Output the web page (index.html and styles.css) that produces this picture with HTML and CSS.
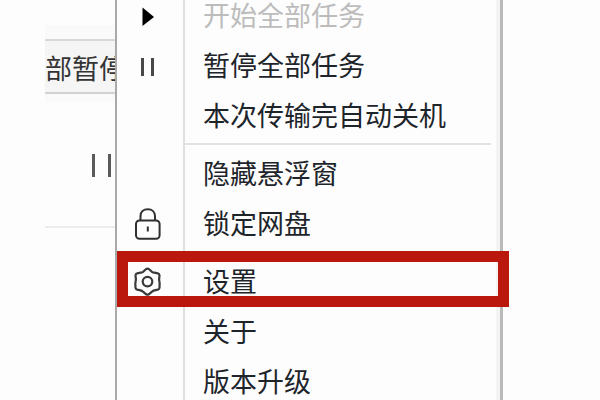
FILE: index.html
```html
<!DOCTYPE html>
<html lang="zh-CN">
<head>
    <meta charset="UTF-8">
    <title>传输列表</title>
    <link rel="stylesheet" href="styles.css">
</head>
<body>
    <div class="panel">
        <div class="toolbar">
            <div class="toolbar-button">部暂停</div>
        </div>
        <div class="task">
            <span class="task-pause"></span>
        </div>
    </div>

    <div class="menu">
        <div class="item disabled">
            <span class="icon">
                <svg width="12" height="20" viewBox="0 0 12 20"><path d="M0.5 1.5L12 11L0.5 20Z" fill="#000"/></svg>
            </span>
            <span class="label">开始全部任务</span>
        </div>
        <div class="item">
            <span class="icon"><span class="pause"></span></span>
            <span class="label">暂停全部任务</span>
        </div>
        <div class="item">
            <span class="icon"></span>
            <span class="label">本次传输完自动关机</span>
        </div>
        <div class="separator"></div>
        <div class="item">
            <span class="icon"></span>
            <span class="label">隐藏悬浮窗</span>
        </div>
        <div class="item">
            <span class="icon">
                <svg width="28" height="34" viewBox="0 0 28 34" fill="none" stroke="#303030" stroke-width="2">
                    <rect x="2" y="13.5" width="23.6" height="18.3" rx="3.5"/>
                    <path d="M6.500 13.500V9C6.500 5 9.500 2.200 13.800 2.200S21 5 21 9V13.500"/>
                    <path d="M13.800 19.500V24.500"/>
                </svg>
            </span>
            <span class="label">锁定网盘</span>
        </div>
        <div class="separator"></div>
        <div class="item">
            <span class="icon">
                <svg width="30" height="30" viewBox="0 0 30 30" fill="none" stroke="#3a3a3a" stroke-width="2.2" stroke-linejoin="round">
                    <path d="M13.200 2Q14.500 1.200 15.800 2L19 4.800Q20 5.500 21.500 5.700L24.800 6.400Q26.300 6.800 26.500 8.300L26.200 11.500Q26 13 26.400 14.600Q26.800 16 26.600 17.500L26.500 20.700Q26.200 22.200 24.800 22.600L21.500 23.400Q20 23.800 19 24.700L15.800 27.300Q14.500 28.100 13.200 27.300L10 24.700Q9 23.800 7.500 23.400L4.200 22.600Q2.800 22.200 2.500 20.700L2.400 17.500Q2.200 16 2.600 14.600Q3 13 2.800 11.500L2.500 8.300Q2.700 6.800 4.200 6.400L7.500 5.700Q9 5.500 10 4.800Z"/>
                    <circle cx="14.5" cy="14.6" r="4.8"/>
                </svg>
            </span>
            <span class="label">设置</span>
        </div>
        <div class="item">
            <span class="icon"></span>
            <span class="label">关于</span>
        </div>
        <div class="item">
            <span class="icon"></span>
            <span class="label">版本升级</span>
        </div>
    </div>

    <div class="highlight"></div>
</body>
</html>
```
FILE: styles.css
```css
body {
    position: relative;
    width: 600px;
    height: 400px;
    margin: 0;
    overflow: hidden;
    background-color: #fdfdfd;
    font-family: "Noto Sans CJK SC", sans-serif;
}

/* окно под меню */
.panel {
    width: 90px;
    margin-left: 45px;
    padding-top: 25px;
}
.toolbar {
    padding: 14px 0 8px;
    background-color: #fafafa;
}
.toolbar-button {
    height: 51px;
    border-top: 2px solid #d8d8d8;
    border-bottom: 2px solid #d2d2d2;
    background-color: #f5f5f5;
    color: #333;
    font-size: 27px;
    line-height: 53px;
    white-space: nowrap;
}
.task {
    box-sizing: border-box;
    height: 126px;
    padding: 52px 0 0 47px;
    border-bottom: 2px solid #ececec;
}
.task-pause {
    display: block;
    box-sizing: border-box;
    width: 19px;
    height: 23px;
    border-left: 3px solid #5a5a5a;
    border-right: 3px solid #5a5a5a;
}

.menu {
    position: absolute;
    top: -9px;
    left: 115px;
    box-sizing: border-box;
    width: 388px;
    height: 420px;
    border-left: 2px solid #a9a9a9;
    border-right: 3px solid #b9b9b9;
    background: linear-gradient(to right, #fdfdfd 66px, #e0e0e0 66px, #e0e0e0 68px, #fdfdfd 68px);
    box-shadow: inset -4px 0 #f3f3f3;
}
.item {
    display: flex;
    align-items: center;
    height: 50px;
}
.icon {
    display: flex;
    justify-content: center;
    width: 61px;
    margin-right: 25px;
}
.label {
    color: #1d252b;
    font-size: 27px;
    line-height: 48px;
    height: 50px;
    white-space: nowrap;
}
.disabled .label {
    color: #bcbcbc;
}
.pause {
    box-sizing: border-box;
    width: 13px;
    height: 18px;
    margin-top: 2px;
    border-left: 3px solid #484848;
    border-right: 3px solid #484848;
}
.separator {
    height: 2px;
    margin: 2px 9px 4px 68px;
    background-color: #e2e2e2;
}

/* красная рамка вокруг пункта */
.highlight {
    position: absolute;
    top: 251px;
    left: 117px;
    box-sizing: border-box;
    width: 392px;
    height: 56px;
    border: 11px solid #bb180d;
}
```
